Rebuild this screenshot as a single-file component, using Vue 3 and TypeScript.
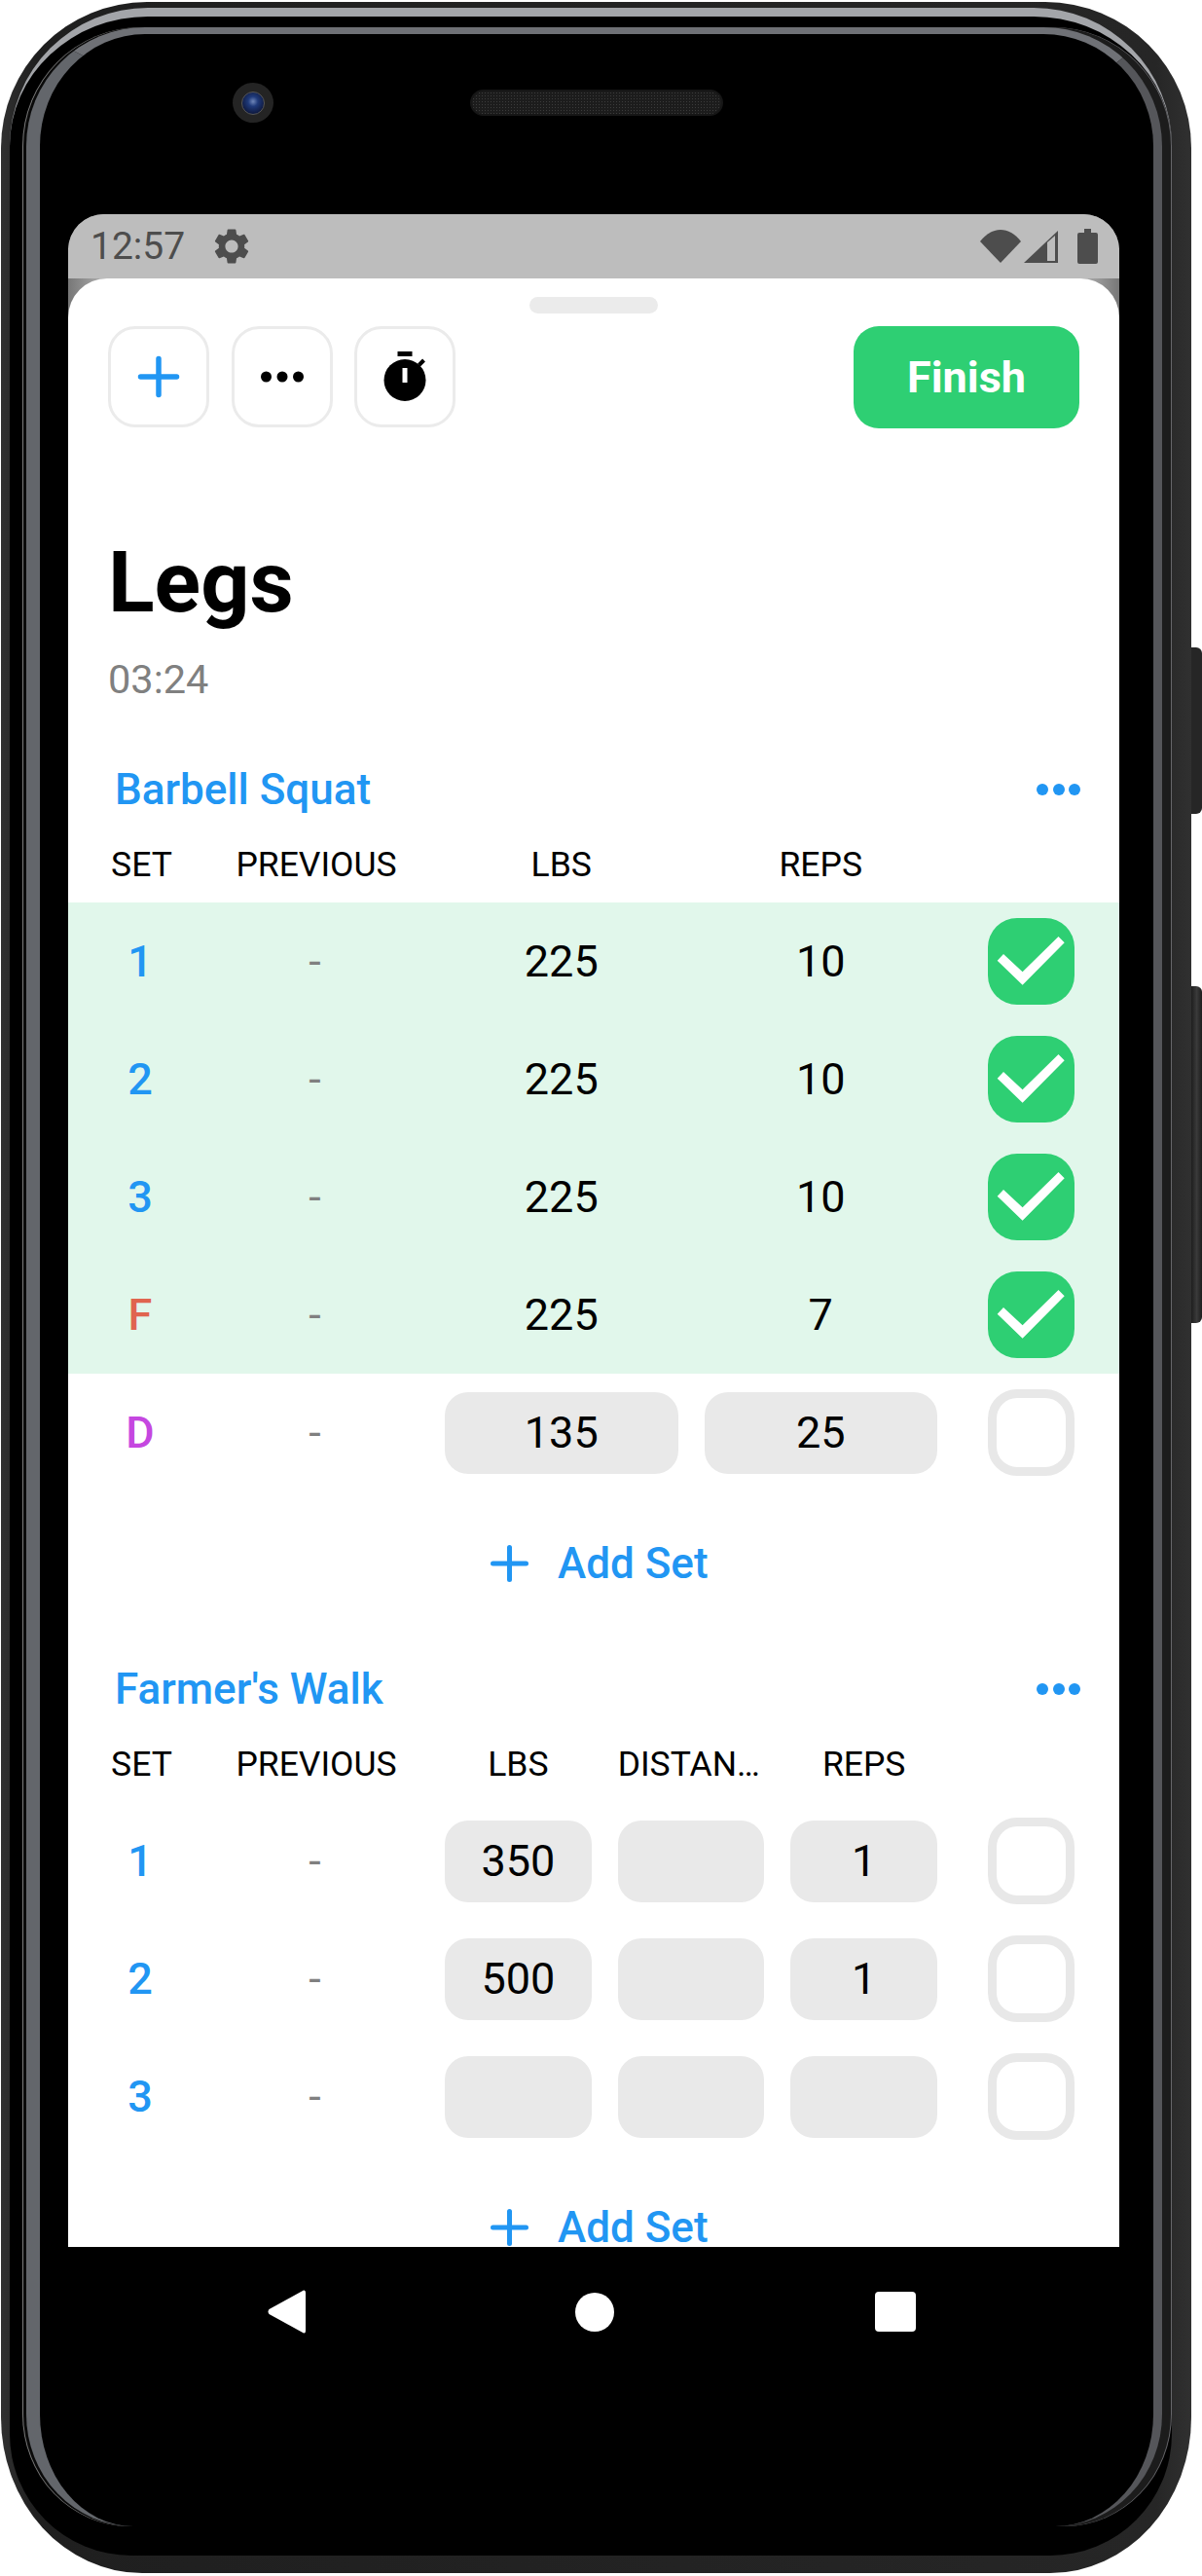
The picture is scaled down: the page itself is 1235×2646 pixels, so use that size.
<script setup lang="ts">
interface WorkSet {
  label: string
  kind?: 'fail' | 'drop'
  values: string[]
  done?: boolean
}

interface Exercise {
  name: string
  columns: string[]
  sets: WorkSet[]
}

const exercises: Exercise[] = [
  {
    name: 'Barbell Squat',
    columns: ['LBS', 'REPS'],
    sets: [
      { label: '1', values: ['225', '10'], done: true },
      { label: '2', values: ['225', '10'], done: true },
      { label: '3', values: ['225', '10'], done: true },
      { label: 'F', kind: 'fail', values: ['225', '7'], done: true },
      { label: 'D', kind: 'drop', values: ['135', '25'] },
    ],
  },
  {
    name: "Farmer's Walk",
    columns: ['LBS', 'DISTANCE', 'REPS'],
    sets: [
      { label: '1', values: ['350', '', '1'] },
      { label: '2', values: ['500', '', '1'] },
      { label: '3', values: ['', '', ''] },
    ],
  },
]
</script>

<template>
  <div class="page">
    <div class="shell">
      <span class="side-btn side-btn--power"></span>
      <span class="side-btn side-btn--volume"></span>
      <div class="rim">
        <div class="bezel">
          <div class="earpiece">
            <div class="camera"><span class="lens"></span></div>
            <div class="speaker"></div>
          </div>

          <div class="screen">
            <div class="status">
              <span class="clock">12:57</span>
              <svg class="gear" viewBox="0 0 24 24">
                <path d="M19.14 12.94c.04-.3.06-.61.06-.94 0-.32-.02-.64-.07-.94l2.03-1.58c.18-.14.23-.41.12-.61l-1.92-3.32c-.12-.22-.37-.29-.59-.22l-2.39.96c-.5-.38-1.03-.7-1.62-.94l-.36-2.54c-.04-.24-.24-.41-.48-.41h-3.84c-.24 0-.43.17-.47.41l-.36 2.54c-.59.24-1.13.57-1.62.94l-2.39-.96c-.22-.08-.47 0-.59.22L2.74 8.87c-.12.21-.08.47.12.61l2.03 1.58c-.05.3-.09.63-.09.94s.02.64.07.94l-2.03 1.58c-.18.14-.23.41-.12.61l1.92 3.32c.12.22.37.29.59.22l2.39-.96c.5.38 1.03.7 1.62.94l.36 2.54c.05.24.24.41.48.41h3.84c.24 0 .44-.17.47-.41l.36-2.54c.59-.24 1.13-.56 1.62-.94l2.39.96c.22.08.47 0 .59-.22l1.92-3.32c.12-.22.07-.47-.12-.61l-2.01-1.58zM12 15.6c-1.98 0-3.6-1.62-3.6-3.6s1.62-3.6 3.6-3.6 3.6 1.62 3.6 3.6-1.62 3.6-3.6 3.6z" />
              </svg>
              <div class="status-icons">
                <svg class="wifi" viewBox="0 0 42 34">
                  <path d="M0 12 C12 -4 30 -4 42 12 L21 34 Z" />
                </svg>
                <svg class="signal" viewBox="0 0 35 33">
                  <path d="M0 33 L35 0 V33 Z" />
                  <path class="signal-empty" d="M24 12 L32 5 V31 H24 Z" />
                </svg>
                <svg class="battery" viewBox="0 0 21 36">
                  <path d="M7 0 H14 V4 H19 Q21 4 21 6 V34 Q21 36 19 36 H2 Q0 36 0 34 V6 Q0 4 2 4 H7 Z" />
                </svg>
              </div>
            </div>

            <div class="sheet">
              <div class="handle"></div>

              <div class="toolbar">
                <button class="tool">
                  <svg class="tool-icon" viewBox="0 0 60 60">
                    <path class="plus" d="M11.5 30 H48.5 M30 11.5 V48.5" />
                  </svg>
                </button>
                <button class="tool">
                  <svg class="tool-icon" viewBox="0 0 60 60">
                    <circle cx="13.5" cy="30" r="5.5" />
                    <circle cx="30" cy="30" r="5.5" />
                    <circle cx="46.5" cy="30" r="5.5" />
                  </svg>
                </button>
                <button class="tool">
                  <svg class="tool-icon" viewBox="0 0 60 60">
                    <rect x="22.5" y="4" width="15" height="5" />
                    <circle cx="30" cy="33.5" r="21.5" />
                    <path class="knob" d="M44.5 18 L49.5 13" />
                    <rect x="27.5" y="21" width="5" height="15" fill="#fff" />
                  </svg>
                </button>
                <button class="finish">Finish</button>
              </div>

              <h1 class="title">Legs</h1>
              <p class="elapsed">03:24</p>

              <section v-for="ex in exercises" :key="ex.name" class="exercise">
                <div class="ex-head">
                  <span class="ex-name">{{ ex.name }}</span>
                  <span class="ex-more"><i></i><i></i><i></i></span>
                </div>

                <div class="grid grid--head">
                  <span>SET</span>
                  <span>PREVIOUS</span>
                  <div class="cells">
                    <span v-for="col in ex.columns" :key="col" class="cell-head">{{ col }}</span>
                  </div>
                </div>

                <div
                  v-for="(set, i) in ex.sets"
                  :key="i"
                  class="grid row"
                  :class="{ 'row--done': set.done }"
                >
                  <span class="set-label" :class="set.kind && `set-label--${set.kind}`">{{ set.label }}</span>
                  <span class="prev">-</span>
                  <div class="cells">
                    <span
                      v-for="(val, j) in set.values"
                      :key="j"
                      class="cell"
                      :class="{ 'cell--input': !set.done }"
                    >{{ val }}</span>
                  </div>
                  <span class="check" :class="{ 'check--on': set.done }">
                    <svg v-if="set.done" viewBox="0 0 89 89">
                      <polygon points="9.7,43.7 35.6,68.7 78.7,25.3 72.5,19 35.6,55.3 16,37" />
                    </svg>
                  </span>
                </div>

                <div class="add-set">
                  <svg class="add-plus" viewBox="0 0 39 38">
                    <path d="M2.5 19 H36.5 M19.5 2.5 V35.5" />
                  </svg>
                  <span>Add Set</span>
                </div>
              </section>
            </div>
          </div>

          <div class="nav">
            <svg class="nav-back" viewBox="0 0 39 45">
              <path d="M37 0.5 Q39 0 39 3 V42 Q39 45 37 44.5 L1.5 25 Q-0.5 22.5 1.5 20 Z" />
            </svg>
            <span class="nav-home"></span>
            <span class="nav-recent"></span>
          </div>
        </div>
      </div>
    </div>
  </div>
</template>

<style>
html,
body {
  margin: 0;
  background: #fff;
}
</style>

<style scoped>
.page {
  width: 1235px;
  height: 2646px;
  overflow: hidden;
  background: #fff;
  font-family: Roboto, "Liberation Sans", sans-serif;
  padding: 2px 0 0 1px;
  box-sizing: border-box;
}

/* ---- phone body ---- */
.shell {
  position: relative;
  width: 1223px;
  height: 2641px;
  box-sizing: border-box;
  padding: 6px 20px 18px 9px;
  background: linear-gradient(90deg, #303030, #1f1f1f 3%, #262626 97%, #303030);
  border-radius: 150px 150px 145px 145px / 150px 150px 160px 160px;
}
.side-btn {
  position: absolute;
  right: -11px;
  width: 11px;
  background: #262626;
  border-radius: 0 6px 6px 0;
}
.side-btn--power {
  top: 663px;
  height: 171px;
}
.side-btn--volume {
  top: 1011px;
  height: 346px;
  background: linear-gradient(90deg, #1e1e1e, #3a3a3a 50%, #1e1e1e);
}
.rim {
  height: 100%;
  box-sizing: border-box;
  padding: 11px 0 30px 17px;
  background: #000;
  border-top: 9px solid #a3a5a9;
  border-radius: 142px 142px 125px 125px / 142px 142px 125px 125px;
}
.bezel {
  display: flex;
  flex-direction: column;
  width: 1167px;
  height: 100%;
  box-sizing: border-box;
  padding: 0 35px 0 29px;
  background: #000;
  border-top: 7px solid #6f7176;
  border-left: 14px solid #63666b;
  border-right: 9px solid #55565a;
  border-radius: 122px 122px 110px 110px / 122px 122px 115px 115px;
  box-shadow: -3px 0 0 #0a0a0a, -4px 0 0 #7c7c7c, 9px 0 0 #1c1c1c, 10px 0 0 #66666a;
}
.earpiece {
  display: flex;
  align-items: center;
  height: 185px;
  flex: none;
  padding: 0 0 44px 169px;
  box-sizing: border-box;
}
.camera {
  display: flex;
  align-items: center;
  justify-content: center;
  width: 42px;
  height: 41px;
  border-radius: 50%;
  background: #242424;
}
.lens {
  width: 24px;
  height: 24px;
  border-radius: 50%;
  border: 1px solid #555;
  box-sizing: border-box;
  background: radial-gradient(circle at 50% 42%, #6f86b8 0, #1f3a7a 30%, #101c44 70%);
}
.speaker {
  width: 260px;
  height: 27px;
  margin-left: 202px;
  border-radius: 14px;
  border: 2px solid #161616;
  box-sizing: border-box;
  background-color: #1c1c1c;
  background-image: radial-gradient(#3c3c3c 35%, transparent 40%);
  background-size: 3px 3px;
}

/* ---- screen ---- */
.screen {
  display: flex;
  flex-direction: column;
  width: 1080px;
  height: 2088px;
  flex: none;
  overflow: hidden;
  border-radius: 37px 37px 0 0;
  background: linear-gradient(90deg, #777, #a8a8a8 3%, #a8a8a8 97%, #777);
}
.status {
  display: flex;
  align-items: center;
  height: 66px;
  flex: none;
  box-sizing: border-box;
  padding: 0 22px 0 23px;
  background: #bdbdbd;
  color: #4d4d4d;
}
.clock {
  font-size: 39px;
  line-height: 66px;
  width: 123px;
}
.gear {
  width: 44px;
  height: 44px;
  fill: #4d4d4d;
}
.status-icons {
  display: flex;
  align-items: center;
  margin-left: auto;
  fill: #4d4d4d;
}
.wifi {
  width: 42px;
  height: 34px;
}
.signal {
  width: 35px;
  height: 33px;
  margin-left: 3px;
}
.signal-empty {
  fill: #bdbdbd;
}
.battery {
  width: 21px;
  height: 36px;
  margin-left: 20px;
}

.sheet {
  flex: 1;
  overflow: hidden;
  background: #fff;
  border-radius: 40px 40px 0 0;
}
.handle {
  width: 132px;
  height: 17px;
  margin: 19px 0 0 474px;
  border-radius: 9px;
  background: #ebebeb;
}

.toolbar {
  display: flex;
  gap: 22.5px;
  margin-top: 13px;
  padding: 0 41px;
}
.tool {
  display: flex;
  align-items: center;
  justify-content: center;
  width: 104px;
  height: 104px;
  padding: 0;
  background: #fff;
  border: 3px solid #ebebeb;
  border-radius: 28px;
}
.tool-icon {
  width: 60px;
  height: 60px;
  fill: #000;
}
.plus {
  fill: none;
  stroke: #2196f3;
  stroke-width: 5.5;
  stroke-linecap: round;
}
.knob {
  stroke: #000;
  stroke-width: 4;
}
.finish {
  width: 232px;
  height: 105px;
  margin-left: auto;
  border: 0;
  border-radius: 26px;
  background: #2ecf73;
  color: #fff;
  font: 700 45px Roboto, sans-serif;
}

.title {
  margin: 108px 0 0 41px;
  font-size: 88px;
  line-height: 100px;
  font-weight: 700;
  color: #000;
}
.elapsed {
  margin: 25px 0 0 41px;
  font-size: 41.5px;
  line-height: 50px;
  color: #808080;
}

/* ---- exercise blocks ---- */
.exercise {
  margin-top: 63px;
}
.exercise + .exercise {
  margin-top: 84px;
}
.ex-head {
  display: flex;
  align-items: center;
  justify-content: space-between;
  height: 50px;
  padding: 0 40px 0 48px;
}
.ex-name {
  font-size: 44px;
  line-height: 50px;
  font-weight: 500;
  color: #2196f3;
}
.ex-more {
  display: flex;
  gap: 4.5px;
}
.ex-more i {
  width: 12px;
  height: 12px;
  border-radius: 50%;
  background: #2196f3;
}

.grid {
  display: grid;
  grid-template-columns: 92px 267px 506px 1fr;
  align-items: center;
  padding: 0 46px 0 28px;
  text-align: center;
}
.grid--head {
  grid-template-columns: 95px 264px 506px 1fr;
  height: 59px;
  margin-top: 32px;
  align-items: start;
  font-size: 35.5px;
  line-height: 40px;
  color: #000;
}
.row {
  height: 121px;
  font-size: 45px;
  color: #000;
}
.row--done {
  background: #e1f7eb;
}
.cells {
  display: flex;
  gap: 27px;
}
.cell-head,
.cell {
  flex: 1 1 0;
  min-width: 0;
}
.cell-head {
  overflow: hidden;
  white-space: nowrap;
  text-overflow: ellipsis;
}
.cell {
  height: 84px;
  line-height: 84px;
  border-radius: 24px;
}
.cell--input {
  background: #e9e9e9;
}
.set-label {
  font-weight: 500;
  color: #2196f3;
}
.set-label--fail {
  color: #e0644f;
}
.set-label--drop {
  color: #c547e0;
}
.prev {
  color: #808080;
}
.check {
  justify-self: end;
  width: 89px;
  height: 89px;
  box-sizing: border-box;
  border: 9px solid #e8e8e8;
  border-radius: 30px;
}
.check--on {
  border: 0;
  background: #2ecf73;
}
.check svg {
  display: block;
  width: 89px;
  height: 89px;
  fill: #fff;
}

.add-set {
  display: flex;
  align-items: center;
  height: 40px;
  margin-top: 54px;
  padding-left: 434px;
  font-size: 44px;
  line-height: 40px;
  font-weight: 500;
  color: #2196f3;
}
.add-plus {
  width: 39px;
  height: 38px;
  margin-right: 30px;
  fill: none;
  stroke: #2196f3;
  stroke-width: 5;
  stroke-linecap: round;
}

/* ---- android nav ---- */
.nav {
  display: flex;
  align-items: center;
  padding: 44px 0 0 205px;
}
.nav-back {
  width: 39px;
  height: 45px;
  fill: #fff;
}
.nav-home {
  width: 40px;
  height: 40px;
  margin-left: 276.5px;
  border-radius: 50%;
  background: #fff;
}
.nav-recent {
  width: 42px;
  height: 41px;
  margin-left: 268.5px;
  border-radius: 4px;
  background: #fff;
}
</style>
